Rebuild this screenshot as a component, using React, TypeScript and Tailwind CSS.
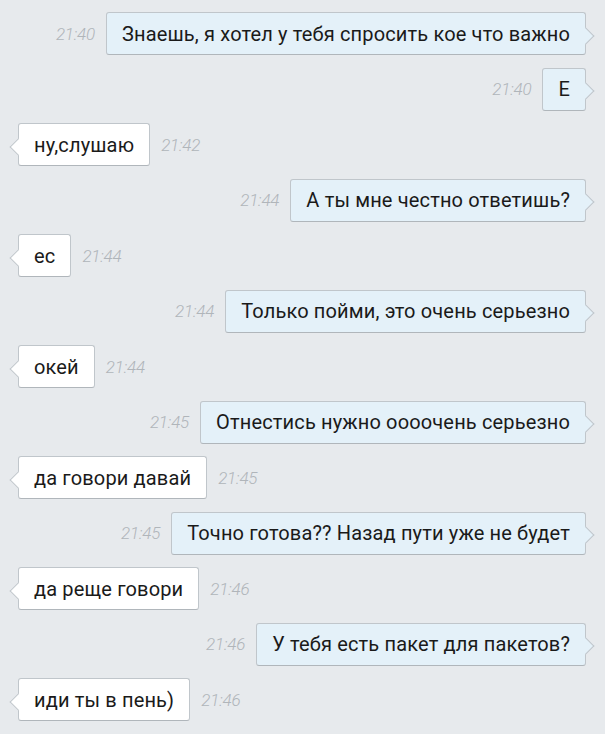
import React from 'react';

type Msg = { text: string; time: string; out: boolean };

const messages: Msg[] = [
  { text: 'Знаешь, я хотел у тебя спросить кое что важно', time: '21:40', out: true },
  { text: 'Е', time: '21:40', out: true },
  { text: 'ну,слушаю', time: '21:42', out: false },
  { text: 'А ты мне честно ответишь?', time: '21:44', out: true },
  { text: 'ес', time: '21:44', out: false },
  { text: 'Только пойми, это очень серьезно', time: '21:44', out: true },
  { text: 'окей', time: '21:44', out: false },
  { text: 'Отнестись нужно оооочень серьезно', time: '21:45', out: true },
  { text: 'да говори давай', time: '21:45', out: false },
  { text: 'Точно готова?? Назад пути уже не будет', time: '21:45', out: true },
  { text: 'да реще говори', time: '21:46', out: false },
  { text: 'У тебя есть пакет для пакетов?', time: '21:46', out: true },
  { text: 'иди ты в пень)', time: '21:46', out: false },
];

function Bubble({ msg }: { msg: Msg }) {
  const time = (
    <span className="text-[17px] font-light italic text-[#b0b5ba] tracking-[-0.2px] pt-[2px]">
      {msg.time}
    </span>
  );
  return (
    <div className={msg.out ? 'flex items-center justify-end gap-[11px] pr-[19px]' : 'flex items-center justify-start gap-[11px] pl-[18px]'}>
      {msg.out && time}
      <div
        className={
          msg.out
            ? 'relative h-[43px] flex items-center px-[15px] rounded-[3px] border border-[#c0c6cb] border-b-[#b0b6bb] bg-[#e4f1f9]'
            : 'relative h-[43px] flex items-center px-[15px] rounded-[3px] border border-[#c0c6cb] border-b-[#b0b6bb] bg-white'
        }
      >
        {msg.out ? (
          <span className="absolute right-[-7px] top-1/2 -mt-[4px] w-[12px] h-[12px] rotate-45 bg-[#e4f1f9] border-t border-r border-[#c0c6cb]" />
        ) : (
          <span className="absolute left-[-7px] top-1/2 -mt-[4px] w-[12px] h-[12px] rotate-45 bg-white border-b border-l border-[#c0c6cb]" />
        )}
        <span className="relative text-[20px] leading-[24px] text-[#1a1a1a] tracking-[0.15px] whitespace-nowrap">{msg.text}</span>
      </div>
      {!msg.out && time}
    </div>
  );
}

export default function App() {
  return (
    <div
      className="w-[605px] h-[734px] overflow-hidden bg-[#e7eaed] pt-[12px] flex flex-col gap-[12.5px]"
      style={{ fontFamily: 'Roboto, "Noto Sans", sans-serif' }}
    >
      {messages.map((m, i) => (
        <Bubble key={i} msg={m} />
      ))}
    </div>
  );
}
